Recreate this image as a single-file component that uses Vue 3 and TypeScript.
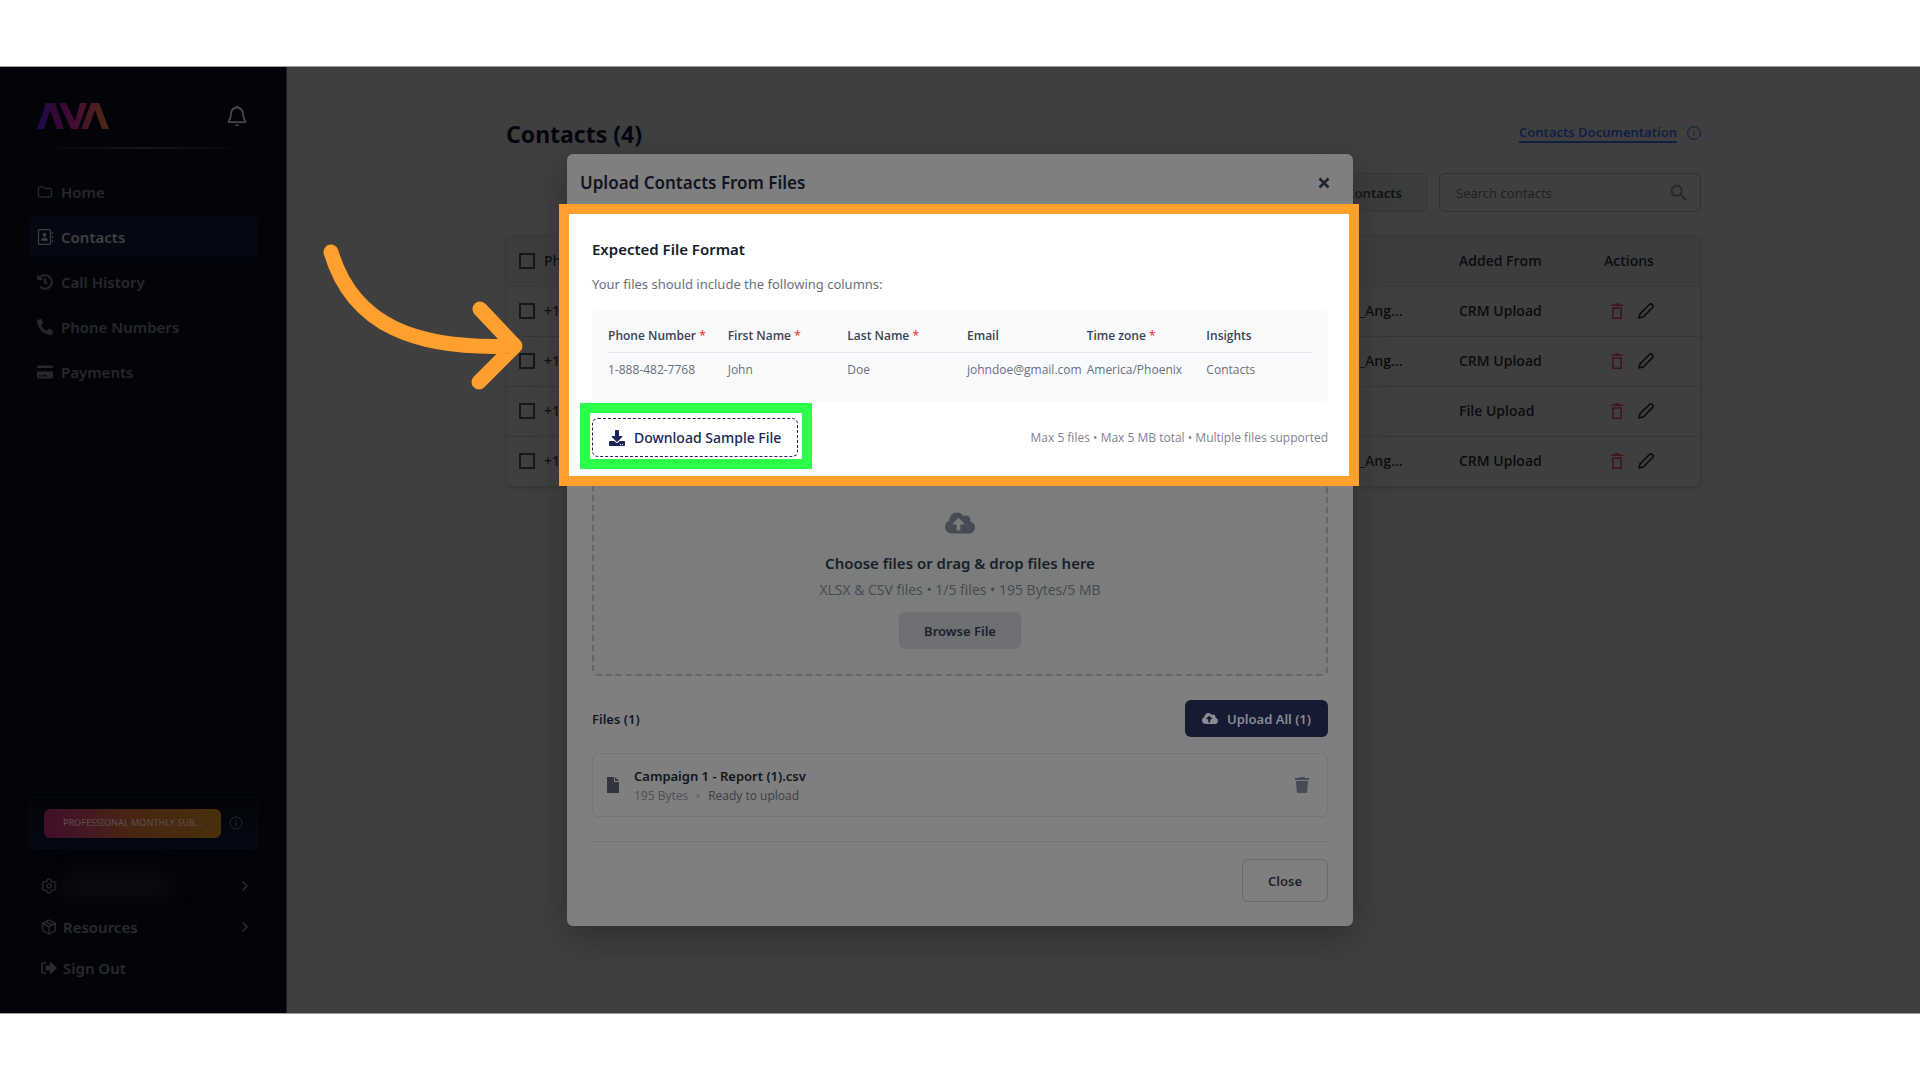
<script setup lang="ts">
import { ref } from 'vue'

interface NavItem {
  label: string
  icon: 'folder' | 'contacts' | 'history' | 'phone' | 'card'
}

interface ContactRow {
  phone: string
  zone: string
  source: string
}

interface FormatColumn {
  title: string
  required: boolean
  sample: string
}

const navItems: NavItem[] = [
  { label: 'Home', icon: 'folder' },
  { label: 'Contacts', icon: 'contacts' },
  { label: 'Call History', icon: 'history' },
  { label: 'Phone Numbers', icon: 'phone' },
  { label: 'Payments', icon: 'card' },
]

const activeItem = ref('Contacts')
const search = ref('')

const contacts: ContactRow[] = [
  { phone: '+1', zone: 'America/Los_Ang...', source: 'CRM Upload' },
  { phone: '+1', zone: 'America/Los_Ang...', source: 'CRM Upload' },
  { phone: '+1', zone: '', source: 'File Upload' },
  { phone: '+1', zone: 'America/Los_Ang...', source: 'CRM Upload' },
]

const formatColumns: FormatColumn[] = [
  { title: 'Phone Number', required: true, sample: '1-888-482-7768' },
  { title: 'First Name', required: true, sample: 'John' },
  { title: 'Last Name', required: true, sample: 'Doe' },
  { title: 'Email', required: false, sample: 'johndoe@gmail.com' },
  { title: 'Time zone', required: true, sample: 'America/Phoenix' },
  { title: 'Insights', required: false, sample: 'Contacts' },
]
</script>

<template>
  <div class="page">
    <div class="stage">
      <aside class="sidebar">
        <div class="brand">
          <svg class="logo" viewBox="0 0 72 26" role="img" aria-label="AVA">
            <defs>
              <linearGradient id="ava" x1="0" y1="0" x2="72" y2="0" gradientUnits="userSpaceOnUse">
                <stop offset="0" stop-color="#1c0c4a" />
                <stop offset="0.25" stop-color="#32093a" />
                <stop offset="0.5" stop-color="#450a35" />
                <stop offset="0.75" stop-color="#4a1a22" />
                <stop offset="1" stop-color="#4d2a10" />
              </linearGradient>
            </defs>
            <path
              fill="url(#ava)"
              d="M0 26 9 0h9l9 26h-7L13 7 7 26zM22 0h7l9 18 5-18h7l-9 26h-7zM44 26 54 0h8l10 26h-7L58 7l-7 19z"
            />
          </svg>
          <button class="plain bell" type="button" aria-label="Notifications">
            <svg viewBox="0 0 24 24" width="24" height="24" fill="none" stroke="currentColor" stroke-width="1.8">
              <path d="M12 3.500a6 6 0 0 0-6 6c0 4.500-1.500 6.500-2.300 7.500-.4.500-.1 1.200.6 1.200h15.400c.7 0 1-.7.600-1.200C19.500 16 18 14 18 9.500a6 6 0 0 0-6-6zM12 2v1.500" />
              <path d="M9.500 20.500c.5 1 1.500 1.500 2.500 1.500s2-.5 2.500-1.500z" fill="currentColor" stroke="none" />
            </svg>
          </button>
        </div>
        <div class="rule"></div>

        <nav class="nav">
          <a
            v-for="item in navItems"
            :key="item.label"
            href="#"
            class="nav-item"
            :class="{ active: item.label === activeItem }"
            @click.prevent="activeItem = item.label"
          >
            <svg v-if="item.icon === 'folder'" viewBox="0 0 16 16" fill="none" stroke="currentColor" stroke-width="1.300">
              <path d="M3 3h3.200l1.600 1.500H13A1.500 1.500 0 0 1 14.500 6v5.500A1.500 1.500 0 0 1 13 13H3a1.500 1.500 0 0 1-1.500-1.500v-7A1.500 1.500 0 0 1 3 3z" />
            </svg>
            <svg v-else-if="item.icon === 'contacts'" viewBox="0 0 16 16" fill="none" stroke="currentColor" stroke-width="1.300">
              <rect x="1.500" y="0.700" width="12" height="14.600" rx="1.200" />
              <circle cx="7.500" cy="5.800" r="1.900" fill="currentColor" stroke="none" />
              <path d="M4 11.800c0-2 1.500-3 3.500-3s3.500 1 3.500 3z" fill="currentColor" stroke="none" />
              <path d="M15.500 3v10" stroke-dasharray="2 2" stroke-width="1" />
            </svg>
            <svg v-else-if="item.icon === 'history'" viewBox="0 0 512 512" fill="currentColor">
              <path d="M504 255.531c.253 136.640-111.180 248.372-247.820 248.468-59.015.042-113.223-20.530-155.822-54.911-11.077-8.940-11.905-25.541-1.839-35.607l11.267-11.267c8.609-8.609 22.353-9.551 31.891-1.984C173.062 425.135 212.781 440 256 440c101.705 0 184-82.311 184-184 0-101.705-82.311-184-184-184-48.814 0-93.149 18.969-126.068 49.932l50.754 50.754c10.080 10.080 2.941 27.314-11.313 27.314H24c-8.837 0-16-7.163-16-16V38.627c0-14.254 17.234-21.393 27.314-11.314l49.372 49.372C129.209 34.136 189.552 8 256 8c136.810 0 247.747 110.780 248 247.531zm-180.912 78.784l9.823-12.630c8.138-10.463 6.253-25.542-4.210-33.679L288 256.349V152c0-13.255-10.745-24-24-24h-16c-13.255 0-24 10.745-24 24v135.651l65.409 50.874c10.463 8.137 25.541 6.253 33.679-4.210z" />
            </svg>
            <svg v-else-if="item.icon === 'phone'" viewBox="0 0 512 512" fill="currentColor">
              <path d="M497.390 361.800l-112-48a24 24 0 0 0-28 6.900l-49.600 60.600A370.660 370.660 0 0 1 130.600 204.110l60.600-49.600a23.940 23.940 0 0 0 6.900-28l-48-112A24.160 24.160 0 0 0 122.600.610l-104 24A24 24 0 0 0 0 48c0 256.500 207.900 464 464 464a24 24 0 0 0 23.400-18.600l24-104a24.290 24.290 0 0 0-14.010-27.600z" />
            </svg>
            <svg v-else viewBox="0 0 16 16" fill="currentColor" fill-rule="evenodd">
              <path d="M1.300 1.500h13.400c.7 0 1.300.6 1.300 1.300V4H0V2.800c0-.7.600-1.300 1.300-1.300zM0 7.500h16v5.700c0 .7-.6 1.300-1.300 1.300H1.300c-.7 0-1.300-.6-1.300-1.300zm2 3.500v1.500h2V11zm3.300 0v1.500h4.400V11z" />
            </svg>
            <span>{{ item.label }}</span>
          </a>
        </nav>

        <div class="side-bottom">
          <div class="plan">
            <button class="plan-name" type="button">PROFESSIONAL MONTHLY SUB...</button>
            <svg viewBox="0 0 14 14" width="14" height="14" fill="none" stroke="currentColor">
              <circle cx="7" cy="7" r="6" />
              <path d="M7 6.200v4M7 3.600v1.300" />
            </svg>
          </div>
          <a href="#" class="side-link" aria-label="Account">
            <svg viewBox="0 0 24 24" fill="none" stroke="currentColor" stroke-width="2" stroke-linejoin="round">
              <path d="M9.700 1.800h4.600l.8 3.200 1.900 1.100 3.200-.9 2.300 4-2.400 2.300v1l2.400 2.300-2.300 4-3.200-.9-1.900 1.100-.8 3.200H9.700L8.900 19 7 17.900l-3.200.9-2.300-4L3.900 12.500v-1L1.500 9.200l2.300-4 3.200.9L8.900 5z" />
              <circle cx="12" cy="12" r="3.200" />
            </svg>
            <span class="account"></span>
            <svg class="chevron" viewBox="0 0 8 12" fill="none" stroke="currentColor" stroke-width="1.600"><path d="m1.500 1.500 4.500 4.500-4.500 4.500" /></svg>
          </a>
          <a href="#" class="side-link">
            <svg viewBox="0 0 24 24" fill="none" stroke="currentColor" stroke-width="2" stroke-linejoin="round">
              <path d="M12 1.500 21.500 6.500v11L12 22.500l-9.500-5v-11zM2.500 6.500 12 11.500l9.500-5M12 11.500v11M7 4l9.800 5.200" />
            </svg>
            <span>Resources</span>
            <svg class="chevron" viewBox="0 0 8 12" fill="none" stroke="currentColor" stroke-width="1.600"><path d="m1.500 1.500 4.500 4.500-4.500 4.500" /></svg>
          </a>
          <a href="#" class="side-link">
            <svg viewBox="0 0 16 16" fill="currentColor">
              <path d="M5 2v1.800H3c-.7 0-1.200.5-1.200 1.200v6c0 .7.500 1.200 1.200 1.200h2V14H3a3 3 0 0 1-3-3V5a3 3 0 0 1 3-3z" />
              <path d="m10 2.200 5.600 5.200c.4.300.4.900 0 1.200L10 13.800c-.5.500-1 .2-1-.5v-2.800H5.500a1 1 0 0 1-1-1v-3a1 1 0 0 1 1-1H9V2.700c0-.7.500-1 1-.5z" />
            </svg>
            <span>Sign Out</span>
          </a>
        </div>
      </aside>

      <main class="content">
        <div class="inner">
          <header class="title-row">
            <h1>Contacts (4)</h1>
            <div class="docs">
              <a href="#">Contacts Documentation</a>
              <svg viewBox="0 0 14 14" width="14" height="14" fill="none" stroke="currentColor">
                <circle cx="7" cy="7" r="6.300" />
                <path d="M7 6v4M7 4v1" />
              </svg>
            </div>
          </header>

          <div class="toolbar">
            <button class="add" type="button">Add Contacts</button>
            <label class="search">
              <input v-model="search" type="text" placeholder="Search contacts" aria-label="Search contacts" />
              <svg viewBox="0 0 24 24" width="22" height="22" fill="currentColor">
                <path d="M15.500 14h-.790l-.280-.270C15.410 12.590 16 11.110 16 9.500 16 5.910 13.090 3 9.500 3S3 5.910 3 9.500 5.910 16 9.500 16c1.610 0 3.090-.590 4.230-1.570l.270.280v.790l5 4.990L20.490 19l-4.990-5zm-6 0C7.010 14 5 11.990 5 9.500S7.010 5 9.500 5 14 7.010 14 9.500 11.990 14 9.500 14z" />
              </svg>
            </label>
          </div>

          <div class="table-wrap">
            <table class="contacts">
              <colgroup>
                <col class="c-check" />
                <col />
                <col class="c-zone" />
                <col class="c-source" />
                <col class="c-actions" />
              </colgroup>
              <thead>
                <tr>
                  <th><input type="checkbox" aria-label="Select all contacts" /></th>
                  <th>Ph</th>
                  <th></th>
                  <th>Added From</th>
                  <th>Actions</th>
                </tr>
              </thead>
              <tbody>
                <tr v-for="(row, i) in contacts" :key="i">
                  <td><input type="checkbox" :aria-label="`Select contact ${i + 1}`" /></td>
                  <td>{{ row.phone }}</td>
                  <td>{{ row.zone }}</td>
                  <td>{{ row.source }}</td>
                  <td>
                    <div class="actions">
                      <button class="plain delete" type="button" aria-label="Delete contact">
                        <svg viewBox="0 0 12 16" width="12" height="16" fill="none" stroke="currentColor" stroke-width="1.500">
                          <path d="M0 2.200h12M4 1h4M1.800 5h8.400v10.200H1.800z" />
                        </svg>
                      </button>
                      <button class="plain edit" type="button" aria-label="Edit contact">
                        <svg viewBox="0 0 16 16" width="16" height="16" fill="none" stroke="currentColor" stroke-width="1.700" stroke-linejoin="round">
                          <path d="m1 15 1-4.200L11.400 1.500a1.900 1.900 0 0 1 2.700 0l.4.400a1.900 1.900 0 0 1 0 2.700L5.200 14z" />
                        </svg>
                      </button>
                    </div>
                  </td>
                </tr>
              </tbody>
            </table>
          </div>
        </div>
      </main>

      <div class="overlay">
        <section class="modal" role="dialog" aria-labelledby="modal-title">
          <header class="modal-head">
            <h2 id="modal-title">Upload Contacts From Files</h2>
            <button class="plain" type="button" aria-label="Dismiss">
              <svg viewBox="0 0 12 12" width="12" height="12" fill="none" stroke="currentColor" stroke-width="2.600"><path d="m1.500 1.500 9 9M10.500 1.500l-9 9" /></svg>
            </button>
          </header>

          <div class="format">
            <div class="format-body">
              <h3>Expected File Format</h3>
              <p>Your files should include the following columns:</p>
              <div class="sample">
                <table>
                  <thead>
                    <tr>
                      <th v-for="col in formatColumns" :key="col.title">
                        {{ col.title }} <span v-if="col.required" class="req">*</span>
                      </th>
                    </tr>
                  </thead>
                  <tbody>
                    <tr>
                      <td v-for="col in formatColumns" :key="col.title">{{ col.sample }}</td>
                    </tr>
                  </tbody>
                </table>
              </div>
              <div class="format-foot">
                <div class="download-wrap">
                  <button class="download" type="button">
                    <svg viewBox="0 0 512 512" width="16" height="16" fill="currentColor">
                      <path d="M216 0h80c13.300 0 24 10.700 24 24v168h87.700c17.800 0 26.700 21.500 14.100 34.100L269.700 378.300c-7.500 7.500-19.800 7.500-27.300 0L90.100 226.100c-12.600-12.600-3.700-34.100 14.100-34.100H192V24c0-13.300 10.700-24 24-24zm296 376v112c0 13.300-10.700 24-24 24H24c-13.300 0-24-10.700-24-24V376c0-13.300 10.700-24 24-24h146.700l49 49c20.100 20.100 52.500 20.100 72.600 0l49-49H488c13.300 0 24 10.700 24 24zm-124 88c0-11-9-20-20-20s-20 9-20 20 9 20 20 20 20-9 20-20zm64 0c0-11-9-20-20-20s-20 9-20 20 9 20 20 20 20-9 20-20z" />
                    </svg>
                    Download Sample File
                  </button>
                </div>
                <span class="limits">Max 5 files • Max 5 MB total • Multiple files supported</span>
              </div>
            </div>
            <svg class="arrow" viewBox="0 0 210 150" width="210" height="150" fill="none" stroke="#ff9f2e" stroke-width="15" stroke-linecap="round" stroke-linejoin="round">
              <path d="M10 11C32 85 96 109 192 105M159 68l35 37-36 36" />
            </svg>
          </div>

          <div class="modal-body">
            <div class="dropzone">
              <svg class="cloud" viewBox="0 0 640 512" width="30" height="24" fill="currentColor">
                <path d="M537.600 226.600c4.100-10.700 6.400-22.400 6.400-34.600 0-53-43-96-96-96-19.700 0-38.100 6-53.300 16.200C367 64.200 315.300 32 256 32c-88.400 0-160 71.600-160 160 0 2.700.1 5.400.2 8.100C40.200 219.800 0 273.200 0 336c0 79.500 64.500 144 144 144h368c70.700 0 128-57.300 128-128 0-61.900-44-113.600-102.400-125.400zM393.400 288H328v112c0 8.800-7.200 16-16 16h-48c-8.800 0-16-7.200-16-16V288h-65.400c-14.300 0-21.400-17.200-11.300-27.300l105.400-105.400c6.200-6.200 16.400-6.200 22.600 0l105.400 105.400c10.100 10.100 2.900 27.300-11.300 27.300z" />
              </svg>
              <strong>Choose files or drag &amp; drop files here</strong>
              <span>XLSX &amp; CSV files • 1/5 files • 195 Bytes/5 MB</span>
              <button type="button">Browse File</button>
            </div>

            <div class="files-head">
              <h4>Files (1)</h4>
              <button class="upload" type="button">
                <svg viewBox="0 0 640 512" width="16" height="13" fill="currentColor">
                  <path d="M537.600 226.600c4.100-10.700 6.400-22.400 6.400-34.600 0-53-43-96-96-96-19.700 0-38.100 6-53.300 16.200C367 64.200 315.300 32 256 32c-88.400 0-160 71.600-160 160 0 2.700.1 5.400.2 8.100C40.200 219.800 0 273.200 0 336c0 79.500 64.500 144 144 144h368c70.700 0 128-57.300 128-128 0-61.900-44-113.600-102.400-125.400zM393.400 288H328v112c0 8.800-7.200 16-16 16h-48c-8.800 0-16-7.200-16-16V288h-65.400c-14.300 0-21.400-17.200-11.300-27.300l105.400-105.400c6.200-6.200 16.400-6.200 22.600 0l105.400 105.400c10.100 10.100 2.900 27.300-11.300 27.300z" />
                </svg>
                Upload All (1)
              </button>
            </div>

            <div class="file-card">
              <svg class="file-icon" viewBox="0 0 12 16" width="12" height="16" fill="currentColor">
                <path d="M0 0h7v5h5v11H0zM8 0l4 4H8z" />
              </svg>
              <div class="file-text">
                <strong>Campaign 1 - Report (1).csv</strong>
                <div class="file-meta">
                  <span>195 Bytes</span><i></i><span class="ready">Ready to upload</span>
                </div>
              </div>
              <button class="plain trash" type="button" aria-label="Remove file">
                <svg viewBox="0 0 14 16" width="14" height="16" fill="currentColor">
                  <path d="M4.500 0h5l.8 1H14v2H0V1h3.700zM1 4h12l-.8 10.700a1.400 1.400 0 0 1-1.400 1.300H3.200a1.400 1.400 0 0 1-1.400-1.300z" />
                </svg>
              </button>
            </div>

            <footer class="modal-foot">
              <button type="button">Close</button>
            </footer>
          </div>
        </section>
      </div>
    </div>
  </div>
</template>

<style>
body {
  margin: 0;
  background: #ffffff;
}
</style>

<style scoped>
* {
  box-sizing: border-box;
}

.page {
  display: flex;
  min-height: 100vh;
  padding: 66px 0;
  background: #ffffff;
  font-family: 'Noto Sans', 'Open Sans', sans-serif;
  font-size: 14px;
  line-height: 20px;
}

h1,
h2,
h3,
h4,
p {
  margin: 0;
}

a {
  color: inherit;
  text-decoration: none;
}

button,
input {
  font: inherit;
  color: inherit;
}

.plain {
  display: flex;
  padding: 0;
  border: 0;
  background: none;
}

svg {
  flex: none;
  display: block;
}

.stage {
  position: relative;
  flex: 1;
  display: flex;
  overflow: hidden;
  border-top: 1px solid #9f9f9f;
  border-bottom: 1px solid #9f9f9f;
  background: #3f3f3f;
}

/* Sidebar */
.sidebar {
  flex: none;
  display: flex;
  flex-direction: column;
  width: 287px;
  padding: 36px 28px 25px 29px;
  border-right: 1px solid #1c1d20;
  background: #030409;
}

.brand {
  display: flex;
  align-items: center;
  justify-content: space-between;
  height: 26px;
  padding: 0 9px 0 8px;
}

.logo {
  width: 72px;
  height: 26px;
}

.bell {
  color: #46474a;
}

.rule {
  height: 2px;
  margin: 18px 9px 0;
  background: linear-gradient(90deg, transparent, #16181c, transparent);
}

.nav {
  display: flex;
  flex-direction: column;
  gap: 4px;
  margin-top: 22px;
}

.nav-item {
  display: flex;
  align-items: center;
  gap: 8px;
  height: 41px;
  padding: 0 8px;
  border-radius: 6px;
  color: #26282b;
  font-size: 15px;
  font-weight: 600;
}

.nav-item svg {
  width: 16px;
  height: 16px;
}

.nav-item.active {
  background: #050713;
  color: #3f4042;
}

.side-bottom {
  margin-top: auto;
}

.plan {
  display: flex;
  align-items: center;
  justify-content: space-between;
  height: 52px;
  margin-bottom: 16px;
  padding: 0 14px;
  border: 1px solid #070a12;
  border-radius: 4px;
  background: linear-gradient(#030408, #040813);
  color: #242a34;
}

.plan-name {
  width: 177px;
  height: 29px;
  padding: 0;
  border: 0;
  border-radius: 6px;
  background: linear-gradient(90deg, #420d2c, #482513, #48300b);
  color: #5c4a48;
  font-size: 9px;
  font-weight: 500;
  white-space: nowrap;
}

.side-link {
  display: flex;
  align-items: center;
  gap: 6px;
  height: 41px;
  padding: 0 9px 0 12px;
  color: #292b2e;
  font-size: 15px;
  font-weight: 600;
}

.side-link svg {
  width: 16px;
  height: 16px;
}

.side-link svg.chevron {
  width: 8px;
  height: 12px;
  margin-left: auto;
}

.account {
  width: 110px;
  height: 20px;
  border-radius: 10px;
  background: #0c0d11;
  filter: blur(10px);
}

/* Contacts page */
.content {
  flex: 1;
  padding: 49px 24px;
}

.inner {
  max-width: 1195px;
  margin: 0 auto;
}

.title-row {
  display: flex;
  align-items: center;
  justify-content: space-between;
  height: 34px;
  color: #05070f;
}

h1 {
  padding-top: 2px;
  font-size: 23px;
  line-height: 32px;
  font-weight: 700;
}

.docs {
  display: flex;
  align-items: center;
  gap: 10px;
  color: #101f42;
}

.docs a {
  border-bottom: 2px solid #101f42;
  font-size: 13px;
  line-height: 18px;
  font-weight: 600;
}

.toolbar {
  display: flex;
  justify-content: flex-end;
  gap: 12px;
  margin-top: 23px;
}

.add {
  height: 39px;
  padding: 0 24px;
  border: 1px solid #343735;
  border-radius: 6px;
  background: #3a3d3b;
  color: #0e1010;
  font-size: 13px;
  font-weight: 600;
}

.search {
  display: flex;
  align-items: center;
  width: 262px;
  height: 39px;
  padding: 0 10px 0 16px;
  border: 1px solid #303132;
  border-radius: 6px;
  color: #272727;
}

.search input {
  flex: 1;
  min-width: 0;
  padding: 0;
  border: 0;
  outline: 0;
  background: none;
  font-size: 13px;
}

.search input::placeholder {
  color: #222222;
  opacity: 1;
}

.table-wrap {
  margin-top: 24px;
  overflow: hidden;
  border: 1px solid #38393a;
  border-radius: 6px;
  box-shadow: 0 1px 3px #333333;
}

.contacts {
  width: 100%;
  table-layout: fixed;
  border-collapse: collapse;
  color: #0b0c0e;
  font-family: 'Open Sans', 'Noto Sans', sans-serif;
  font-size: 14px;
  font-weight: 600;
}

.c-check {
  width: 36px;
}

.c-zone {
  width: 184px;
}

.c-source {
  width: 145px;
}

.c-actions {
  width: 97px;
}

.contacts th,
.contacts td {
  height: 50px;
  padding: 0 0 0 1px;
  border-top: 1px solid #363636;
  text-align: left;
  font-weight: 600;
  white-space: nowrap;
}

.contacts th {
  height: 49px;
  border-top: 0;
  background: #3c3d3e;
}

.contacts th:first-child,
.contacts td:first-child {
  padding-left: 12px;
}

.contacts input {
  display: block;
  appearance: none;
  width: 16px;
  height: 16px;
  margin: 0;
  border: 2px solid #171717;
}

.actions {
  display: flex;
  gap: 15px;
  padding-left: 7px;
}

.delete {
  color: #3f1519;
}

.edit {
  color: #0b0c0e;
}

/* Modal */
.overlay {
  position: absolute;
  inset: 0;
  display: flex;
  align-items: center;
  justify-content: center;
}

.modal {
  width: 786px;
  border-radius: 6px;
  background: #7f7f7f;
  box-shadow: 0 10px 32px #2f2f2f;
}

.modal-head {
  display: flex;
  align-items: center;
  justify-content: space-between;
  height: 60px;
  padding: 0 23px 2px 13px;
  color: #10141f;
}

.modal-head h2 {
  font-size: 17px;
  line-height: 24px;
  font-weight: 600;
}

.modal-head button {
  color: #20262f;
}

.format {
  position: relative;
  z-index: 1;
  padding: 0 4px 0 2px;
}

.format-body {
  position: relative;
  height: 262px;
  padding: 24px 21px 0 23px;
  background: #ffffff;
  box-shadow: 0 0 0 10px #ff9f2e;
}

.format h3 {
  color: #141b2b;
  font-size: 15px;
  line-height: 22px;
  font-weight: 600;
}

.format p {
  margin-top: 14px;
  color: #69707d;
  font-size: 13px;
  line-height: 20px;
}

.sample {
  height: 92px;
  margin-top: 16px;
  padding: 9px 16px;
  border-radius: 6px;
  background: #f9fafc;
}

.sample table {
  width: 100%;
  table-layout: fixed;
  border-collapse: collapse;
  font-family: 'Open Sans', 'Noto Sans', sans-serif;
  font-size: 12px;
  line-height: 16px;
}

.sample th,
.sample td {
  width: 17%;
  height: 36px;
  padding: 0;
  color: #69707d;
  text-align: left;
  font-weight: 400;
  white-space: nowrap;
}

.sample th {
  height: 33px;
  padding-top: 2px;
  border-bottom: 1px solid #e3e5e9;
  color: #3b4454;
  font-weight: 600;
}

.sample th:last-child,
.sample td:last-child {
  width: 15%;
}

.req {
  color: #f04444;
}

.format-foot {
  display: flex;
  align-items: center;
  justify-content: space-between;
  margin-top: 16px;
}

/* Green marker around the download button */
.download-wrap {
  position: relative;
}

.download-wrap::after {
  content: '';
  position: absolute;
  inset: -15px -14px -12px -12px;
  border: 10px solid #2cff48;
  pointer-events: none;
}

.download {
  display: flex;
  align-items: center;
  gap: 9px;
  height: 39px;
  padding: 0 16px;
  border: 1px dashed #1b2559;
  border-radius: 6px;
  background: #ffffff;
  color: #1b2559;
  font-size: 14px;
  font-weight: 500;
}

.limits {
  color: #7c838f;
  font-family: 'Open Sans', 'Noto Sans', sans-serif;
  font-size: 12px;
}

.arrow {
  position: absolute;
  top: 27px;
  right: 100%;
  margin-right: 36px;
}

.modal-body {
  padding: 6px 25px 24px;
}

.dropzone {
  display: flex;
  flex-direction: column;
  align-items: center;
  height: 194px;
  padding-top: 27px;
  border: 2px dashed #62656d;
  border-radius: 6px;
  background: #7b7d7c;
  color: #4e5258;
}

.cloud {
  color: #464b54;
}

.dropzone strong {
  margin-top: 16px;
  color: #191e29;
  font-size: 15px;
  line-height: 24px;
  font-weight: 600;
}

.dropzone span {
  margin-top: 5px;
  color: #45484f;
  font-family: 'Open Sans', 'Noto Sans', sans-serif;
  font-size: 14px;
}

.dropzone button {
  height: 37px;
  margin-top: 12px;
  padding: 0 25px;
  border: 0;
  border-radius: 6px;
  background: #6f7073;
  color: #1b202b;
  font-size: 13px;
  font-weight: 600;
}

.files-head {
  display: flex;
  align-items: center;
  justify-content: space-between;
  margin-top: 24px;
  color: #14181f;
}

.files-head h4 {
  font-size: 13px;
  font-weight: 600;
}

.upload {
  display: flex;
  align-items: center;
  gap: 9px;
  height: 37px;
  padding: 0 17px;
  border: 0;
  border-radius: 6px;
  background: #161b33;
  color: #8a8b91;
  font-size: 13px;
  font-weight: 600;
}

.file-card {
  display: flex;
  align-items: center;
  gap: 15px;
  height: 64px;
  margin-top: 16px;
  padding: 0 18px 0 14px;
  border: 1px solid #737476;
  border-radius: 6px;
}

.file-icon {
  color: #30353f;
}

.file-text {
  flex: 1;
  padding-top: 2px;
}

.file-text strong {
  display: block;
  color: #11151c;
  font-size: 13px;
  font-weight: 600;
}

.file-meta {
  display: flex;
  align-items: center;
  gap: 8px;
  color: #4c5056;
  font-family: 'Open Sans', 'Noto Sans', sans-serif;
  font-size: 12px;
  line-height: 20px;
}

.file-meta i {
  width: 4px;
  height: 4px;
  border-radius: 50%;
  background: #686b70;
}

.ready {
  color: #3a3e44;
}

.trash {
  color: #464b54;
}

.modal-foot {
  display: flex;
  justify-content: flex-end;
  margin-top: 24px;
  padding-top: 17px;
  border-top: 1px solid #737476;
}

.modal-foot button {
  height: 43px;
  padding: 0 25px;
  border: 1px solid #696b6e;
  border-radius: 6px;
  background: none;
  color: #1d222b;
  font-size: 13px;
  font-weight: 600;
}
</style>
